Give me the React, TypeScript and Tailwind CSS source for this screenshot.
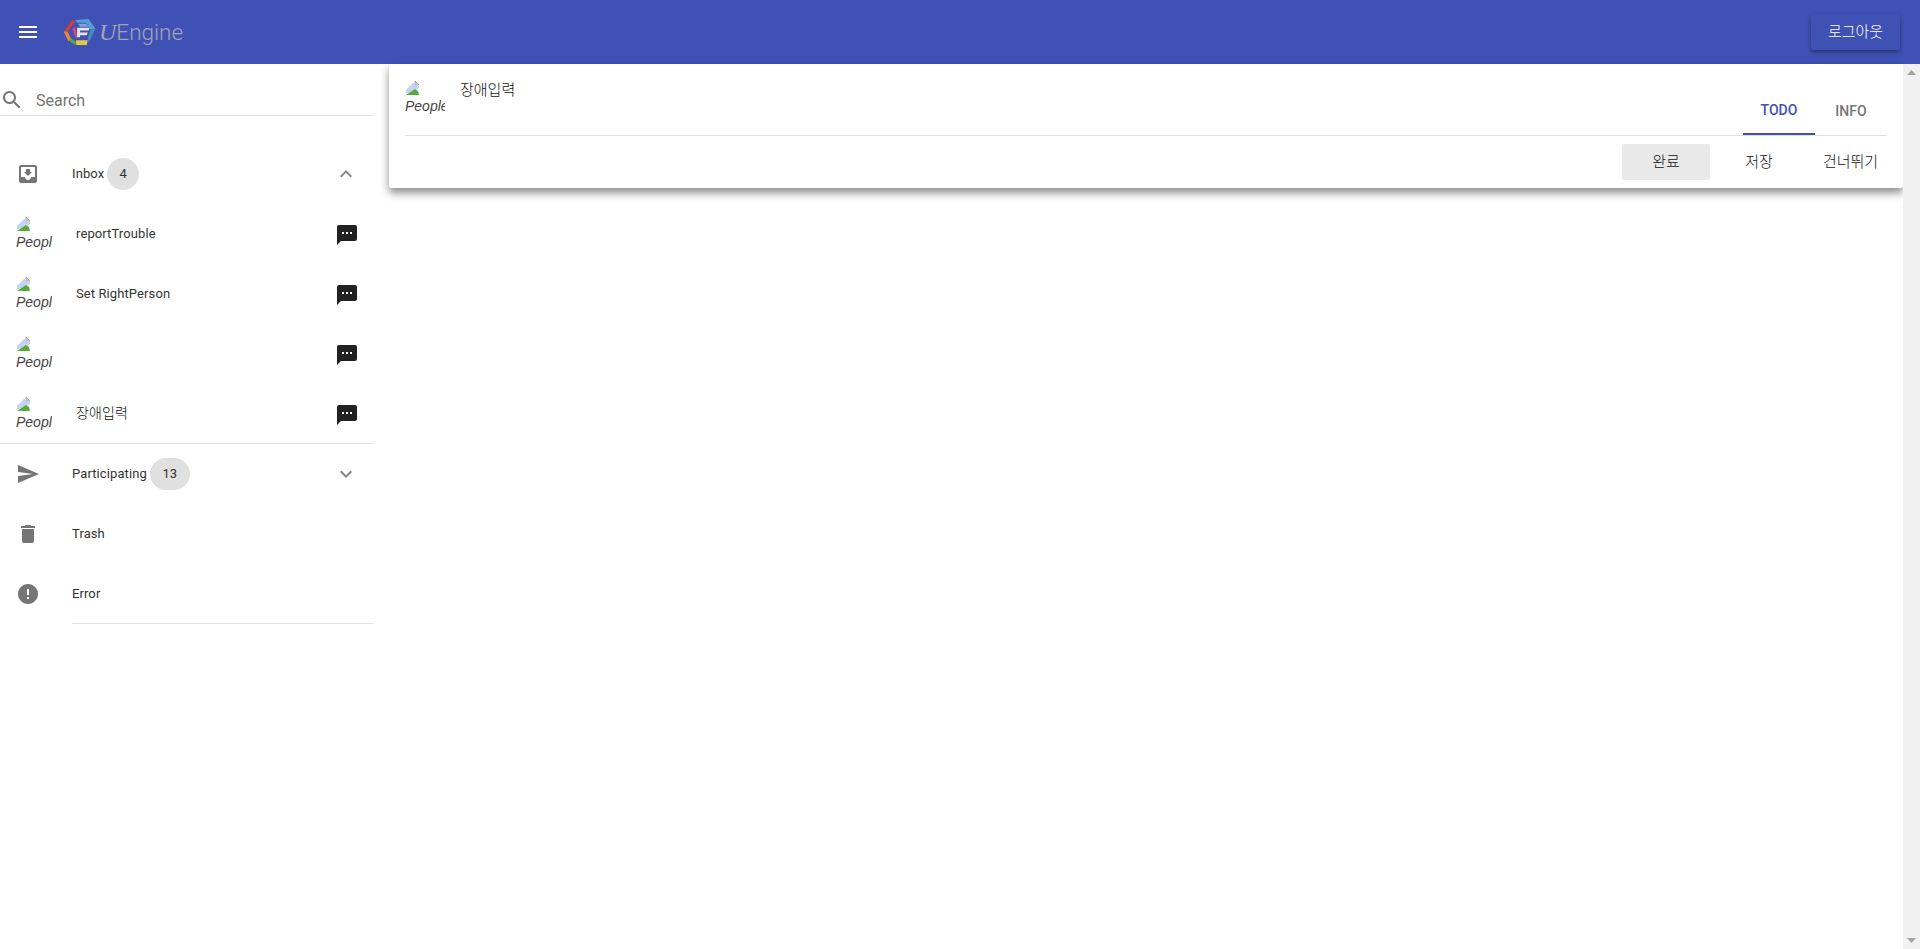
import type { ReactNode } from "react"

const ICONS = {
  menu: "M3 18h18v-2H3v2zm0-5h18v-2H3v2zm0-7v2h18V6H3z",
  search:
    "M15.5 14h-.79l-.28-.27C15.41 12.59 16 11.11 16 9.5 16 5.91 13.09 3 9.5 3S3 5.91 3 9.5 5.91 16 9.5 16c1.61 0 3.09-.59 4.23-1.57l.27.28v.79l5 4.99L20.49 19l-4.99-5zm-6 0C7.01 14 5 11.99 5 9.5S7.01 5 9.5 5 14 7.01 14 9.5 11.99 14 9.5 14z",
  inbox:
    "M19 3H4.99c-1.11 0-1.98.89-1.98 2L3 19c0 1.1.88 2 1.99 2H19c1.1 0 2-.9 2-2V5c0-1.11-.9-2-2-2zm0 12h-4c0 1.66-1.35 3-3 3s-3-1.34-3-3H4.99V5H19v10zm-3-5h-2V7h-4v3H8l4 4 4-4z",
  sms: "M20 2H4c-1.1 0-1.99.9-1.99 2L2 22l4-4h14c1.1 0 2-.9 2-2V4c0-1.1-.9-2-2-2zM9 11H7V9h2v2zm4 0h-2V9h2v2zm4 0h-2V9h2v2z",
  send: "M2.01 21L23 12 2.01 3 2 10l15 2-15 2z",
  trash: "M6 19c0 1.1.9 2 2 2h8c1.1 0 2-.9 2-2V7H6v12zM19 4h-3.5l-1-1h-5l-1 1H5v2h14V4z",
  error:
    "M12 2C6.48 2 2 6.48 2 12s4.48 10 10 10 10-4.48 10-10S17.52 2 12 2zm1 15h-2v-2h2v2zm0-4h-2V7h2v6z",
  less: "M12 8l-6 6 1.41 1.41L12 10.83l4.59 4.58L18 14z",
  more: "M16.59 8.59L12 13.17 7.41 8.59 6 10l6 6 6-6z",
}

function Icon({ name, className }: { name: keyof typeof ICONS; className: string }) {
  return (
    <svg viewBox="0 0 24 24" fill="currentColor" className={className}>
      <path d={ICONS[name]} />
    </svg>
  )
}

// the reference shows a broken avatar image: browser's placeholder + alt text
function BrokenImage({ width }: { width: string }) {
  return (
    <div className={`${width} h-10 shrink-0 overflow-hidden font-['Liberation_Sans',sans-serif] text-sm leading-[16px] italic text-[#444]`}>
      <svg viewBox="0 0 16 16" className="block h-4 w-4">
        <path d="M1 1h9l4 4v10H1z" fill="#fff" />
        <path d="M10 1v4h4z" fill="#d5d5d5" />
        <path d="M10 1l4 4M10 1v4h4" stroke="#a8a8a8" fill="none" />
        <path d="M1 10l7-7h2v3l4 0v2L4 13l-3 0z" fill="#c3d3f3" />
        <path d="M1 15l9-6 3 2 1 4z" fill="#5aa83a" />
      </svg>
      <span className="mt-[2px] block whitespace-nowrap">People</span>
    </div>
  )
}

function Count({ children, className }: { children: ReactNode; className: string }) {
  return (
    <span className={`flex h-8 items-center justify-center rounded-full bg-[#e0e0e0] text-[13px] text-[#333] ${className}`}>
      {children}
    </span>
  )
}

function SectionRow({
  icon,
  label,
  count,
  countWidth,
  chevron,
}: {
  icon: keyof typeof ICONS
  label: string
  count?: number
  countWidth?: string
  chevron?: "less" | "more"
}) {
  return (
    <div className="flex h-[60px] items-center pl-4 pr-[15px]">
      <Icon name={icon} className="h-6 w-6 shrink-0 text-[#757575]" />
      <span className="ml-8 text-[13px] tracking-[0.1px] text-[#333]">{label}</span>
      {count !== undefined && <Count className={`ml-[3px] ${countWidth}`}>{count}</Count>}
      {chevron && <Icon name={chevron} className="ml-auto h-6 w-6 text-[#858585]" />}
    </div>
  )
}

function TaskRow({ title, korean }: { title: string; korean?: boolean }) {
  return (
    <div className="flex h-[60px] items-center pl-4 pr-[14px]">
      <div className="pt-[3px]">
        <BrokenImage width="w-9" />
      </div>
      <span className={`ml-6 tracking-[0.1px] ${korean ? "-mt-[2px] text-sm font-light text-[#111]" : "-mt-px text-[13px] text-[#333]"}`}>
        {title}
      </span>
      <Icon name="sms" className="ml-auto mt-[2px] h-6 w-6 text-[#212121]" />
    </div>
  )
}

function Logo() {
  return (
    <div className="ml-[23px] flex items-center">
      <svg viewBox="0 0 33 27" className="h-[26px] w-[33px]">
        <path d="M9 1l3 2-8 10H0z" fill="#d0413c" />
        <path d="M0 13h4l4 8-3 2z" fill="#e8853a" />
        <path d="M6 23l2-3 5 4-1 3z" fill="#5aa83a" />
        <path d="M9 10l3-2 2 12-2-1z" fill="#d84a7c" />
        <path d="M12 1l14-1 7 10-5 1-5-7h-9z" fill="#5b9bd5" />
        <path d="M15 5h8l3 3H17z" fill="#7aa8dc" />
        <path d="M14 9h13l-1 3h-9v2h8l-1 3h-7v2h-3z" fill="#e6e4dc" />
        <path d="M13 22h12l-1 5H13z" fill="#e8c83a" />
        <path d="M28 11l5-1-7 15-1-5z" fill="#3f8fb0" />
      </svg>
      <span className="ml-[3px] text-[22.5px] leading-none font-light text-[#a0a4b6]">
        <span className="font-['Liberation_Serif',serif] text-[24px] italic">U</span>Engine
      </span>
    </div>
  )
}

function ActionButton({ label, active }: { label: string; active?: boolean }) {
  return (
    <button className={`h-9 w-[88px] rounded-[2px] text-[15px] font-light text-[#111] last:w-[85px] ${active ? "bg-[#e9e9e9]" : ""}`}>
      {label}
    </button>
  )
}

function Arrow({ d }: { d: string }) {
  return (
    <svg viewBox="0 0 9 5" className="h-[5px] w-[9px]">
      <path d={d} fill="#a3a3a3" />
    </svg>
  )
}

export default function App() {
  return (
    <div className="flex h-screen flex-col overflow-hidden bg-white font-['Roboto','Noto_Sans_CJK_KR',sans-serif] text-[#333]">
      {/* Header */}
      <header className="flex h-16 shrink-0 items-center bg-[#3f51b5] pr-5 pl-4 text-white">
        <Icon name="menu" className="h-6 w-6" />
        <Logo />
        <button className="ml-auto h-9 w-[89px] rounded-[2px] bg-[#3f51b5] text-[15px] font-light text-white shadow-[0_2px_4px_rgba(0,0,0,0.4)]">
          로그아웃
        </button>
      </header>

      <div className="flex min-h-0 flex-1">
        {/* Sidebar */}
        <aside className="w-[373px] shrink-0">
          <div className="flex h-[52px] items-center gap-3 border-b border-[#e0e0e0] pt-5">
            <Icon name="search" className="h-6 w-6 text-[#757575]" />
            <span className="mt-[2px] text-base text-[#757575]">Search</span>
          </div>
          <div className="mt-7">
            <SectionRow icon="inbox" label="Inbox" count={4} countWidth="w-8" chevron="less" />
            <TaskRow title="reportTrouble" />
            <TaskRow title="Set RightPerson" />
            <TaskRow title="" />
            <TaskRow title="장애입력" korean />
            <div className="-mt-px border-b border-[#e0e0e0]" />
            <SectionRow icon="send" label="Participating" count={13} countWidth="w-10" chevron="more" />
            <SectionRow icon="trash" label="Trash" />
            <SectionRow icon="error" label="Error" />
            <div className="-mt-px ml-[72px] border-b border-[#e0e0e0]" />
          </div>
        </aside>

        {/* Content */}
        <main className="min-w-0 flex-1 pl-4">
          <div className="h-[124px] rounded-b-[2px] bg-white px-4 shadow-[0_5px_8px_rgba(0,0,0,0.45)]">
            <div className="flex h-[72px] border-b border-[#e0e0e0]">
              <div className="pt-4">
                <BrokenImage width="w-10" />
              </div>
              <span className="ml-[15px] pt-[17px] text-[15px] leading-[18px] font-light text-[#111]">장애입력</span>
              <div className="ml-auto flex items-end">
                <div className="flex h-[49px] w-[72px] items-center justify-center border-b-2 border-[#3f51b5] text-sm font-medium text-[#3f51b5]">
                  TODO
                </div>
                <div className="flex h-[49px] w-[72px] items-center justify-center text-sm font-medium text-[#757575]">
                  INFO
                </div>
              </div>
            </div>
            <div className="-mr-[6px] mt-2 flex justify-end gap-[5px]">
              <ActionButton label="완료" active />
              <ActionButton label="저장" />
              <ActionButton label="건너뛰기" />
            </div>
          </div>
        </main>

        {/* Scrollbar */}
        <div className="flex w-[17px] shrink-0 flex-col items-center justify-between bg-[#f1f1f1] py-[6px]">
          <Arrow d="M4.5 0L9 5H0z" />
          <Arrow d="M0 0h9L4.5 5z" />
        </div>
      </div>
    </div>
  )
}
